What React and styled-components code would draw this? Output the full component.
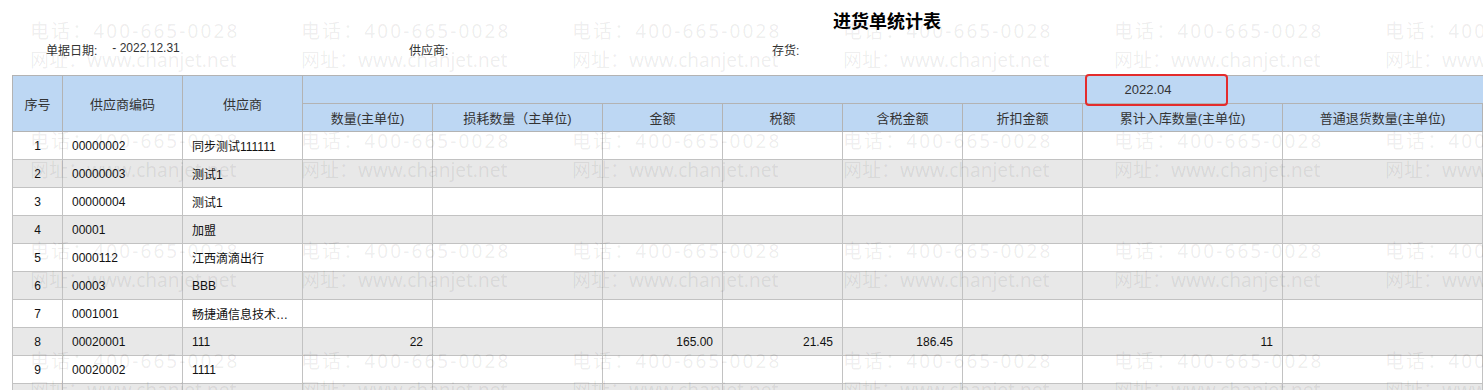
import React from 'react'
import styled, { createGlobalStyle } from 'styled-components'

const GlobalStyle = createGlobalStyle`
  html, body {
    margin: 0;
    padding: 0;
    background: #fff;
  }
  body {
    font-family: "Liberation Sans", "Noto Sans CJK SC", sans-serif;
    color: #333;
  }
`

const Page = styled.div`
  position: relative;
  width: 1483px;
  height: 390px;
  overflow: hidden;
  background: #fff;
`

const Title = styled.h1`
  width: 1774px;
  margin: 0;
  padding-top: 8px;
  height: 26px;
  line-height: 24px;
  text-align: center;
  font-size: 18px;
  font-weight: bold;
  color: #000;
  font-family: "Noto Sans CJK SC", sans-serif;
`

const FilterBar = styled.div`
  display: flex;
  padding-left: 46px;
  height: 30px;
  align-items: center;
  font-size: 12px;
  color: #333;
`

const FilterItem = styled.div`
  width: 363px;
  display: flex;
  gap: 15px;
`

const TableWrap = styled.div`
  padding: 11px 0 0 12px;
`

const Table = styled.table`
  border-collapse: collapse;
  table-layout: fixed;
  width: 1981px;
  font-size: 12px;
`

const HeadCell = styled.th`
  height: 28px;
  box-sizing: border-box;
  padding: 0 4px;
  background: #bdd7f3;
  border: 1px solid #b3b3b3;
  font-weight: normal;
  font-size: 13px;
  color: #333;
  text-align: center;
  white-space: nowrap;
`

const Row = styled.tr`
  background: ${p => (p.$even ? '#e8e8e8' : '#fff')};
`

const Cell = styled.td`
  height: 28px;
  box-sizing: border-box;
  padding: 0 9px;
  border: 1px solid #c2c2c2;
  color: #111;
  text-align: ${p => p.$align || 'left'};
  white-space: nowrap;
  overflow: hidden;
  text-overflow: ellipsis;
`

const Highlight = styled.div`
  position: absolute;
  left: 1085px;
  top: 74px;
  width: 143px;
  height: 32px;
  box-sizing: border-box;
  border: 2px solid #e42c2c;
  border-radius: 4px;
  pointer-events: none;
`

const Watermark = styled.div`
  position: absolute;
  inset: 0;
  display: grid;
  grid-template-columns: repeat(6, 271px);
  grid-auto-rows: 110px;
  pointer-events: none;
`

const MarkTile = styled.div`
  padding: 17px 0 0 30px;
  font-family: "Noto Sans", "Noto Sans CJK SC", sans-serif;
  font-size: 19px;
  line-height: 29px;
  color: rgba(0, 0, 0, 0.075);
  white-space: nowrap;
`

const MarkLine = styled.div`
  letter-spacing: ${p => p.$spacing}px;
`

const columns = [
  { w: 50 }, { w: 120 }, { w: 120 },
  { w: 130, title: '数量(主单位)' },
  { w: 170, title: '损耗数量（主单位)' },
  { w: 120, title: '金额' },
  { w: 120, title: '税额' },
  { w: 120, title: '含税金额' },
  { w: 120, title: '折扣金额' },
  { w: 200, title: '累计入库数量(主单位)' },
  { w: 200, title: '普通退货数量(主单位)' },
  { w: 200, title: '普通退货金额' },
  { w: 311, title: '累计退货数量(主单位)' },
]

const rows = [
  ['1', '00000002', '同步测试111111'],
  ['2', '00000003', '测试1'],
  ['3', '00000004', '测试1'],
  ['4', '00001', '加盟'],
  ['5', '0000112', '江西滴滴出行'],
  ['6', '00003', 'BBB'],
  ['7', '0001001', '畅捷通信息技术股份有限公司'],
  ['8', '00020001', '111', '22', '', '165.00', '21.45', '186.45', '', '11'],
  ['9', '00020002', '1111'],
  ['10', '', ''],
]

const valueCols = columns.slice(3)

const App = () => {
  return (
    <Page>
      <GlobalStyle />
      <Title>进货单统计表</Title>
      <FilterBar>
        <FilterItem>
          <span>单据日期:</span>
          <span>- 2022.12.31</span>
        </FilterItem>
        <FilterItem>
          <span>供应商:</span>
        </FilterItem>
        <FilterItem>
          <span>存货:</span>
        </FilterItem>
      </FilterBar>
      <TableWrap>
        <Table>
          <colgroup>
            {columns.map((c, i) => (
              <col key={i} style={{ width: c.w }} />
            ))}
          </colgroup>
          <thead>
            <tr>
              <HeadCell rowSpan={2}>序号</HeadCell>
              <HeadCell rowSpan={2}>供应商编码</HeadCell>
              <HeadCell rowSpan={2}>供应商</HeadCell>
              <HeadCell colSpan={valueCols.length}>2022.04</HeadCell>
            </tr>
            <tr>
              {valueCols.map(c => (
                <HeadCell key={c.title}>{c.title}</HeadCell>
              ))}
            </tr>
          </thead>
          <tbody>
            {rows.map((r, i) => (
              <Row key={r[0]} $even={i % 2 === 1}>
                <Cell $align="center">{r[0]}</Cell>
                <Cell>{r[1]}</Cell>
                <Cell>{r[2]}</Cell>
                {valueCols.map((c, j) => (
                  <Cell key={c.title} $align="right">{r[3 + j] || ''}</Cell>
                ))}
              </Row>
            ))}
          </tbody>
        </Table>
      </TableWrap>
      <Highlight />
      <Watermark>
        {Array.from({ length: 24 }).map((_, i) => (
          <MarkTile key={i}>
            <MarkLine $spacing={2.1}>电话：400-665-0028</MarkLine>
            <MarkLine $spacing={0}>网址：www.chanjet.net</MarkLine>
          </MarkTile>
        ))}
      </Watermark>
    </Page>
  )
}

export default App
